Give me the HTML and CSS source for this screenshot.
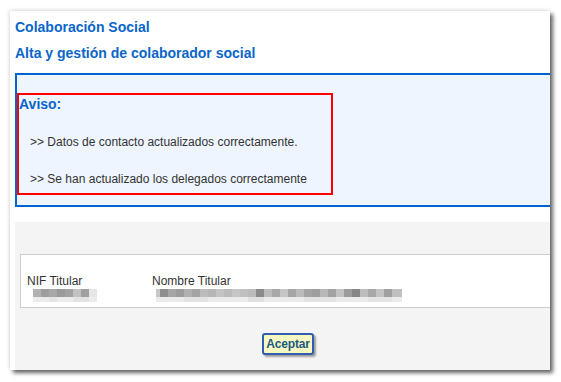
FILE: index.html
```html
<!DOCTYPE html>
<html lang="es">
<head>
<meta charset="utf-8">
<title>Colaboración Social</title>
<link rel="stylesheet" href="styles.css">
</head>
<body>
<div class="frame">
  <div class="panel">
    <div class="content">
      <h1 class="title">Colaboración Social</h1>
      <h2 class="title sub">Alta y gestión de colaborador social</h2>

      <div class="info-box">
        <div class="notice">
          <div class="notice-title">Aviso:</div>
          <p class="msg">&gt;&gt; Datos de contacto actualizados correctamente.</p>
          <p class="msg">&gt;&gt; Se han actualizado los delegados correctamente</p>
        </div>
      </div>

      <div class="grey-area">
        <div class="data-box">
          <div class="col col-nif">
            <div class="label">NIF Titular</div>
            <svg class="blur blur-nif" width="64" height="13" viewBox="0 0 64 13" aria-hidden="true">
              <rect x="0" y="0" width="8" height="8" fill="#b2b2b2"/>
              <rect x="8" y="0" width="8" height="8" fill="#9e9e9e"/>
              <rect x="16" y="0" width="8" height="8" fill="#a8a8a8"/>
              <rect x="24" y="0" width="8" height="8" fill="#9a9a9a"/>
              <rect x="32" y="0" width="8" height="8" fill="#a2a2a2"/>
              <rect x="40" y="0" width="8" height="8" fill="#c2c2c2"/>
              <rect x="48" y="0" width="8" height="8" fill="#a0a0a0"/>
              <rect x="56" y="0" width="8" height="8" fill="#e6e6e6"/>
              <rect x="0" y="8" width="64" height="5" fill="#ececec"/>
              <rect x="16" y="8" width="8" height="5" fill="#e4e4e4"/>
              <rect x="40" y="8" width="16" height="5" fill="#e2e2e2"/>
            </svg>
          </div>
          <div class="col col-name">
            <div class="label">Nombre Titular</div>
            <svg class="blur blur-name" width="246" height="13" viewBox="0 0 246 13" aria-hidden="true">
              <rect x="0" y="0" width="246" height="8" fill="#b4b4b4"/>
              <rect x="0" y="0" width="4" height="8" fill="#c8c8c8"/>
              <rect x="4" y="0" width="8" height="8" fill="#8e8e8e"/>
              <rect x="12" y="0" width="8" height="8" fill="#a6a6a6"/>
              <rect x="20" y="0" width="8" height="8" fill="#9c9c9c"/>
              <rect x="28" y="0" width="8" height="8" fill="#b0b0b0"/>
              <rect x="36" y="0" width="8" height="8" fill="#a4a4a4"/>
              <rect x="44" y="0" width="8" height="8" fill="#bcbcbc"/>
              <rect x="52" y="0" width="8" height="8" fill="#b6b6b6"/>
              <rect x="60" y="0" width="8" height="8" fill="#c4c4c4"/>
              <rect x="68" y="0" width="8" height="8" fill="#bababa"/>
              <rect x="76" y="0" width="8" height="8" fill="#c6c6c6"/>
              <rect x="84" y="0" width="8" height="8" fill="#c0c0c0"/>
              <rect x="92" y="0" width="8" height="8" fill="#bbbbbb"/>
              <rect x="100" y="0" width="8" height="8" fill="#8a8a8a"/>
              <rect x="108" y="0" width="8" height="8" fill="#bcbcbc"/>
              <rect x="116" y="0" width="8" height="8" fill="#a8a8a8"/>
              <rect x="124" y="0" width="8" height="8" fill="#c6c6c6"/>
              <rect x="132" y="0" width="8" height="8" fill="#a6a6a6"/>
              <rect x="140" y="0" width="8" height="8" fill="#bababa"/>
              <rect x="148" y="0" width="8" height="8" fill="#a4a4a4"/>
              <rect x="156" y="0" width="8" height="8" fill="#9e9e9e"/>
              <rect x="164" y="0" width="8" height="8" fill="#b8b8b8"/>
              <rect x="172" y="0" width="8" height="8" fill="#a2a2a2"/>
              <rect x="180" y="0" width="8" height="8" fill="#c2c2c2"/>
              <rect x="188" y="0" width="8" height="8" fill="#9c9c9c"/>
              <rect x="196" y="0" width="8" height="8" fill="#868686"/>
              <rect x="204" y="0" width="8" height="8" fill="#bdbdbd"/>
              <rect x="212" y="0" width="8" height="8" fill="#a8a8a8"/>
              <rect x="220" y="0" width="8" height="8" fill="#c4c4c4"/>
              <rect x="228" y="0" width="8" height="8" fill="#a0a0a0"/>
              <rect x="236" y="0" width="10" height="8" fill="#c0c0c0"/>
              <rect x="0" y="8" width="246" height="5" fill="#ebebeb"/>
              <rect x="28" y="8" width="24" height="5" fill="#e2e2e2"/>
              <rect x="92" y="8" width="16" height="5" fill="#e0e0e0"/>
              <rect x="148" y="8" width="32" height="5" fill="#e3e3e3"/>
              <rect x="212" y="8" width="24" height="5" fill="#e4e4e4"/>
            </svg>
          </div>
        </div>
        <div class="actions">
          <button class="btn" type="button">Aceptar</button>
        </div>
      </div>
    </div>
  </div>
</div>
</body>
</html>
```

FILE: styles.css
```css
html, body {
  margin: 0;
  padding: 0;
  background: #ffffff;
}

body {
  font-family: "Liberation Sans", Arial, sans-serif;
  color: #333333;
}

.frame {
  padding: 11px 11px 12px 10px;
}

.panel {
  width: 540px;
  height: 359px;
  overflow: hidden;
  background: #ffffff;
  box-shadow: 3px 3px 4px rgba(0, 0, 0, 0.6), -1px -1px 4px rgba(0, 0, 0, 0.12);
}

.content {
  width: 546px;
  padding-left: 5px;
  padding-top: 8px;
}

.title {
  margin: 0;
  font-size: 14px;
  line-height: 16px;
  font-weight: bold;
  color: #0a66c8;
}

.sub {
  margin-top: 10px;
}

.info-box {
  margin-top: 12px;
  border: 2px solid #0066cc;
  background: #eef5fe;
  padding: 18px 0 10px 0;
}

.notice {
  width: 312px;
  border: 2px solid #ff0000;
  padding: 1px 0 7px 0;
}

.notice-title {
  font-size: 14px;
  line-height: 16px;
  font-weight: bold;
  color: #0a66c8;
}

.msg {
  margin: 23px 0 0 0;
  padding-left: 11px;
  font-size: 12px;
  line-height: 14px;
  color: #333333;
}

.grey-area {
  margin-top: 15px;
  background: #f4f4f4;
  padding: 32px 0 40px 5px;
}

.data-box {
  display: flex;
  background: #ffffff;
  border: 1px solid #cccccc;
  padding: 19px 0 5px 6px;
}

.label {
  font-size: 12px;
  line-height: 14px;
  color: #333333;
  white-space: nowrap;
}

.col-nif {
  width: 125px;
}

.blur {
  display: block;
  margin-top: 1px;
}

.blur-nif {
  margin-left: 6px;
}

.blur-name {
  margin-left: 4px;
}

.actions {
  display: flex;
  justify-content: center;
  margin-top: 25px;
  padding-right: 5px;
}

.btn {
  width: 52px;
  height: 22px;
  padding: 0;
  font-family: "Liberation Sans", Arial, sans-serif;
  font-size: 12px;
  font-weight: bold;
  letter-spacing: -0.2px;
  color: #1a5a84;
  background: #f8f8c2;
  border: 2px solid #2d5fae;
  border-radius: 3px;
  box-shadow: 2px 2px 2px rgba(0, 0, 0, 0.35);
}
```
